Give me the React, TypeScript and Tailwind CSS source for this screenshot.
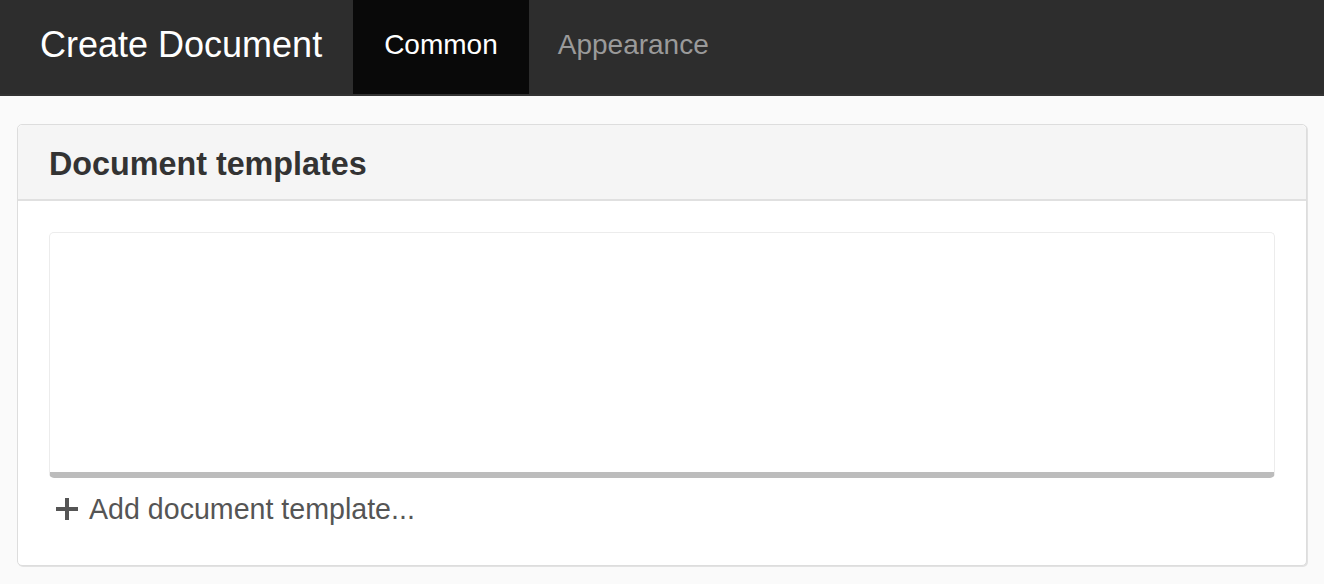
export default function App() {
  return (
    <div className="min-h-[584px] bg-[#fafafa] font-['Liberation_Sans',Arial,sans-serif]">
      <header className="flex h-[96px] items-start border-b-2 border-[#333333] bg-[#2d2d2d]">
        <div className="flex h-[94px] items-center pb-[5px] pl-[40px] pr-[31px] text-[36px] text-white">
          Create Document
        </div>
        <nav className="flex h-[94px]">
          <div className="flex items-center bg-[#090909] px-[31px] pb-[5px] text-[28px] text-white">Common</div>
          <div className="flex items-center px-[29px] pb-[5px] text-[28px] text-[#9a9a9a]">Appearance</div>
        </nav>
      </header>

      <main className="px-[17px] pt-[28px]">
        <section className="rounded-[5px] border border-[#dddddd] bg-white shadow-[1px_1px_0_#e2e2e2]">
          <div className="flex h-[76px] items-center rounded-t-[5px] border-b-2 border-[#e0e0e0] bg-[#f5f5f5] px-[31px] pt-[4px]">
            <h2 className="text-[32.3px] font-bold text-[#333333]">Document templates</h2>
          </div>
          <div className="px-[31px] pt-[31px] pb-[34px]">
            <div className="h-[246px] rounded-[5px] border border-b-[6px] border-[#ececec] border-b-[#bcbcbc]" />
            <button className="mt-[10px] flex items-center gap-[10px] pl-[6px] text-[28.6px] text-[#555555]">
              <svg width="24" height="24" viewBox="0 0 24 24" className="shrink-0">
                <path d="M12 1v22M1 12h22" stroke="#555555" strokeWidth="4" />
              </svg>
              <span>Add document template...</span>
            </button>
          </div>
        </section>
      </main>
    </div>
  )
}
